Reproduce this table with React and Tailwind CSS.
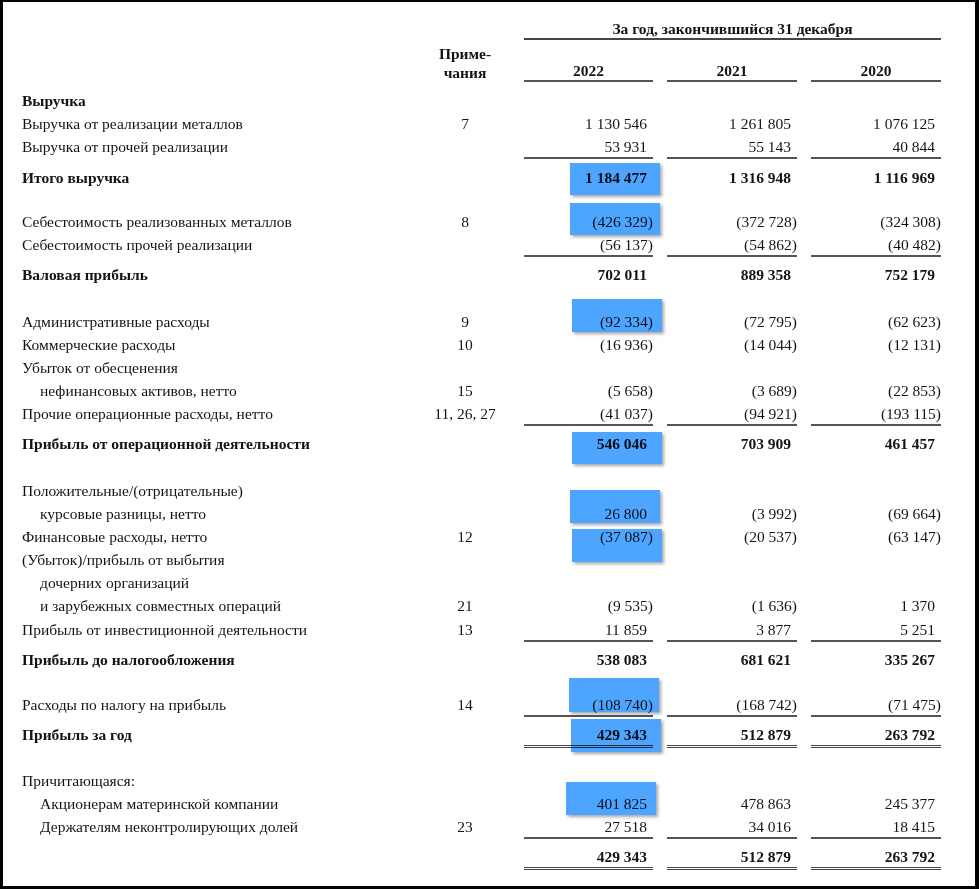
const rows = [
  { label: 'Выручка', bold: true, pt: 'pt-[9px]' },
  { label: 'Выручка от реализации металлов', note: '7', v: ['1 130 546', '1 261 805', '1 076 125'], pt: 'pt-[3px]' },
  { label: 'Выручка от прочей реализации', v: ['53 931', '55 143', '40 844'], pt: 'pt-[3px]', line: 'single' },
  { label: 'Итого выручка', bold: true, v: ['1 184 477', '1 316 948', '1 116 969'], pt: 'pt-[9px]' },
  { label: 'Себестоимость реализованных металлов', note: '8', v: ['(426 329)', '(372 728)', '(324 308)'], pt: 'pt-[24px]' },
  { label: 'Себестоимость прочей реализации', v: ['(56 137)', '(54 862)', '(40 482)'], pt: 'pt-[3px]', line: 'single' },
  { label: 'Валовая прибыль', bold: true, v: ['702 011', '889 358', '752 179'], pt: 'pt-[8px]' },
  { label: 'Административные расходы', note: '9', v: ['(92 334)', '(72 795)', '(62 623)'], pt: 'pt-[27px]' },
  { label: 'Коммерческие расходы', note: '10', v: ['(16 936)', '(14 044)', '(12 131)'], pt: 'pt-[3px]' },
  { label: 'Убыток от обесценения', pt: 'pt-[3px]' },
  { label: 'нефинансовых активов, нетто', indent: true, note: '15', v: ['(5 658)', '(3 689)', '(22 853)'], pt: 'pt-[3px]' },
  { label: 'Прочие операционные расходы, нетто', note: '11, 26, 27', v: ['(41 037)', '(94 921)', '(193 115)'], pt: 'pt-[3px]', line: 'single' },
  { label: 'Прибыль от операционной деятельности', bold: true, v: ['546 046', '703 909', '461 457'], pt: 'pt-[8px]' },
  { label: 'Положительные/(отрицательные)', pt: 'pt-[27px]' },
  { label: 'курсовые разницы, нетто', indent: true, v: ['26 800', '(3 992)', '(69 664)'], pt: 'pt-[3px]' },
  { label: 'Финансовые расходы, нетто', note: '12', v: ['(37 087)', '(20 537)', '(63 147)'], pt: 'pt-[3px]' },
  { label: '(Убыток)/прибыль от выбытия', pt: 'pt-[3px]' },
  { label: 'дочерних организаций', indent: true, pt: 'pt-[3px]' },
  { label: 'и зарубежных совместных операций', indent: true, note: '21', v: ['(9 535)', '(1 636)', '1 370'], pt: 'pt-[3px]' },
  { label: 'Прибыль от инвестиционной деятельности', note: '13', v: ['11 859', '3 877', '5 251'], pt: 'pt-[4px]', line: 'single' },
  { label: 'Прибыль до налогообложения', bold: true, v: ['538 083', '681 621', '335 267'], pt: 'pt-[8px]' },
  { label: 'Расходы по налогу на прибыль', note: '14', v: ['(108 740)', '(168 742)', '(71 475)'], pt: 'pt-[25px]', line: 'single' },
  { label: 'Прибыль за год', bold: true, v: ['429 343', '512 879', '263 792'], pt: 'pt-[8px]', line: 'double' },
  { label: 'Причитающаяся:', pt: 'pt-[23px]' },
  { label: 'Акционерам материнской компании', indent: true, v: ['401 825', '478 863', '245 377'], pt: 'pt-[3px]' },
  { label: 'Держателям неконтролирующих долей', indent: true, note: '23', v: ['27 518', '34 016', '18 415'], pt: 'pt-[3px]', line: 'single' },
  { label: '', bold: true, v: ['429 343', '512 879', '263 792'], pt: 'pt-[8px]', line: 'double' },
]

const cols = ['w-[129px] ml-[9px]', 'w-[130px] ml-[14px]', 'w-[130px] ml-[14px]']

// highlighted cells (marker boxes laid over the 2022 column)
const marks = [
  'left-[567px] top-[161px] h-[32px]',
  'left-[567px] top-[201px] h-[32px]',
  'left-[569px] top-[297px] h-[33px]',
  'left-[569px] top-[430px] h-[32px]',
  'left-[567px] top-[488px] h-[33px]',
  'left-[569px] top-[527px] h-[33px]',
  'left-[566px] top-[676px] h-[34px]',
  'left-[568px] top-[717px] h-[33px]',
  'left-[563px] top-[780px] h-[33px]',
]

function Row({ r }) {
  return (
    <div className={`flex items-start ${r.pt}`}>
      <div className={`w-[393px] shrink-0 leading-[20px] whitespace-nowrap ${r.bold ? 'font-bold' : ''} ${r.indent ? 'pl-[18px]' : ''}`}>
        {r.label}
      </div>
      <div className="w-[100px] shrink-0 text-center leading-[20px] whitespace-nowrap">{r.note}</div>
      {cols.map((c, i) => {
        const v = r.v ? r.v[i] : ''
        const line =
          r.line === 'single'
            ? 'border-b-2 border-[#555]'
            : r.line === 'double'
            ? 'border-b-[3px] border-double border-[#444]'
            : ''
        return (
          <div
            key={i}
            className={`${c} shrink-0 text-right leading-[20px] whitespace-nowrap ${r.bold ? 'font-bold' : ''} ${v.endsWith(')') ? '' : 'pr-[6px]'} ${line}`}
          >
            {v || '\u00a0'}
          </div>
        )
      })}
    </div>
  )
}

export default function App() {
  return (
    <div className="w-[979px] h-[889px] bg-white">
      <div className="relative w-[979px] h-[889px] border-l-[3px] border-t-2 border-r-4 border-b-[3px] border-black bg-white pl-[19px] font-['Liberation_Serif',serif] text-[15.5px] text-[#141414]">

        {/* Header */}
        <div className="flex pt-[17px]">
          <div className="w-[502px] shrink-0" />
          <div className="w-[417px] shrink-0 text-center font-bold leading-[19px] border-b-2 border-[#444]">
            За год, закончившийся 31 декабря
          </div>
        </div>
        <div className="flex items-end mt-[4px]">
          <div className="w-[393px] shrink-0" />
          <div className="w-[100px] shrink-0 text-center font-bold leading-[19px]">
            Приме-<br />чания
          </div>
          {['2022', '2021', '2020'].map((y, i) => (
            <div key={y} className={`${cols[i]} shrink-0 text-center font-bold leading-[18px] border-b-2 border-[#555]`}>
              {y}
            </div>
          ))}
        </div>

        {/* Body */}
        {rows.map((r, i) => (
          <Row key={i} r={r} />
        ))}

        {marks.map((m, i) => (
          <div
            key={i}
            className={`absolute ${m} w-[90px] bg-[#4ea5ff] mix-blend-multiply shadow-[2px_2px_3px_rgba(0,0,0,0.35)]`}
          />
        ))}
      </div>
    </div>
  )
}
